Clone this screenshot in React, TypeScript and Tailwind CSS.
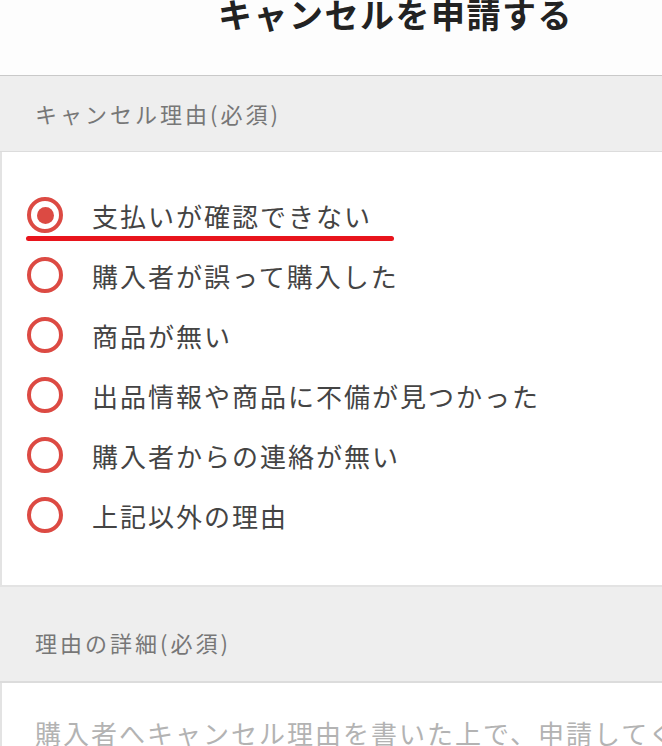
const reasons = [
  '支払いが確認できない',
  '購入者が誤って購入した',
  '商品が無い',
  '出品情報や商品に不備が見つかった',
  '購入者からの連絡が無い',
  '上記以外の理由',
];

function Radio({ checked }: { checked: boolean }) {
  return (
    <span className="w-[36px] h-[36px] rounded-full border-[4px] border-[#dc4a43] flex items-center justify-center shrink-0">
      {checked && <span className="w-[17px] h-[17px] rounded-full bg-[#dc4a43]" />}
    </span>
  );
}

export default function App() {
  return (
    <div className="w-[662px] h-[746px] overflow-hidden bg-white font-['Noto_Sans_CJK_JP','Noto_Sans',sans-serif]">
      {/* Header */}
      <header className="h-[76px] bg-[#fdfdfd] border-b border-[#c9c9c9] overflow-hidden">
        <h1 className="pl-[218px] -mt-[3px] text-[34px] leading-[34px] font-bold tracking-[1.5px] text-[#222] whitespace-nowrap">
          キャンセルを申請する
        </h1>
      </header>

      {/* Reason label */}
      <div className="h-[76px] bg-[#eeeeee] border-b border-[#dcdcdc] flex items-center pl-[35px]">
        <span className="text-[22px] tracking-[3px] text-[#777]">キャンセル理由(必須)</span>
      </div>

      {/* Reasons */}
      <div className="h-[435px] bg-white border-l-2 border-b-2 border-[#e3e3e3] pt-[33px]">
        {reasons.map((r, i) => (
          <div key={r} className="relative h-[60px] flex items-center pl-[25px] gap-[29px]">
            <Radio checked={i === 0} />
            <span className="text-[26px] tracking-[2px] text-[#444] whitespace-nowrap">{r}</span>
            {i === 0 && (
              <span className="absolute left-[24px] top-[51px] w-[368px] h-[5px] rounded-full bg-[#e8141c]" />
            )}
          </div>
        ))}
      </div>

      {/* Detail label */}
      <div className="h-[96px] bg-[#eeeeee] border-b-2 border-[#dcdcdc] pl-[35px] pt-[40px]">
        <span className="text-[22px] leading-[30px] tracking-[3px] text-[#777]">理由の詳細(必須)</span>
      </div>

      {/* Detail input */}
      <div className="bg-white border-l-2 border-[#e3e3e3] pl-[33px] pt-[32px] h-[100px] overflow-hidden">
        <p className="text-[26px] leading-[36px] tracking-[2px] text-[#b3b3b3] whitespace-nowrap">
          購入者へキャンセル理由を書いた上で、申請してください
        </p>
      </div>
    </div>
  );
}
